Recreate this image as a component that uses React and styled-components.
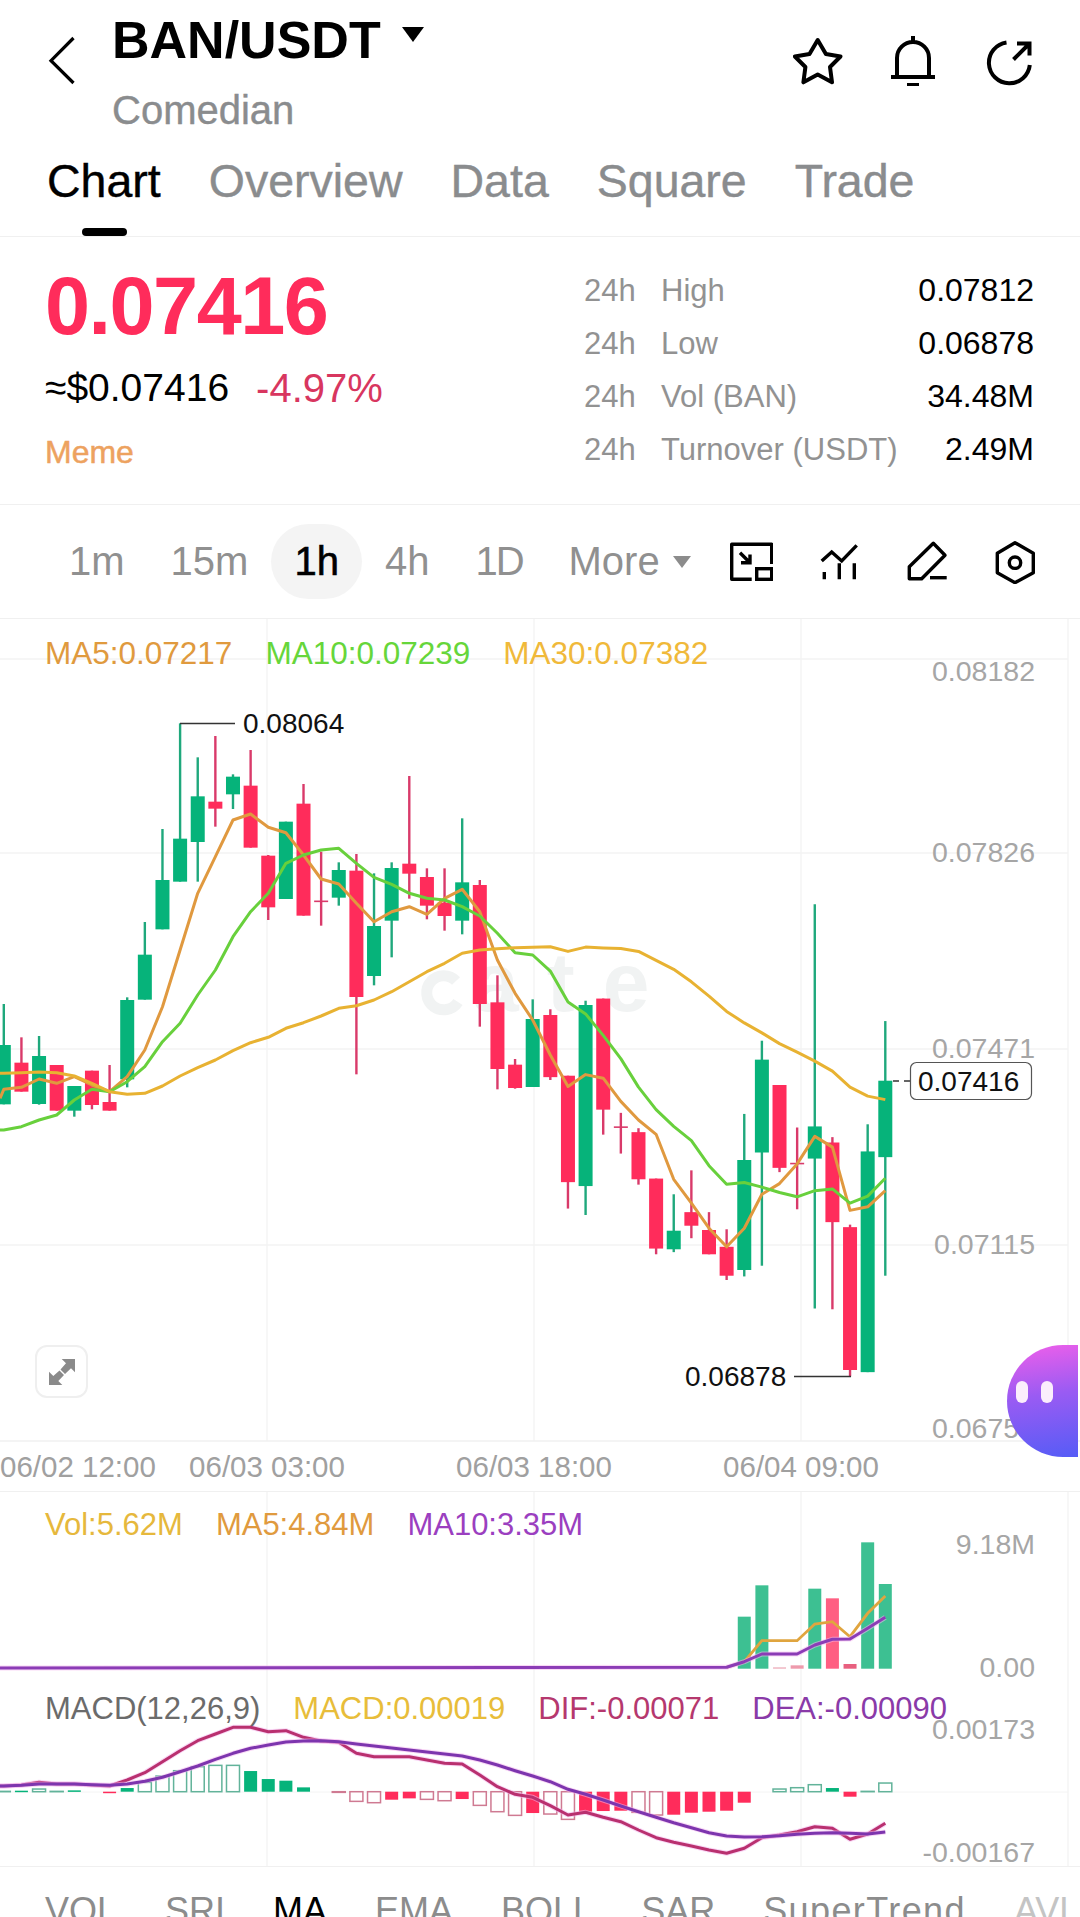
import styled, { createGlobalStyle } from "styled-components";

const GREEN = "#06b37a";
const RED = "#ff2c5b";
const SANS = '"Liberation Sans", Arial, sans-serif';

/* ---------- chart data, sampled off the screenshot ---------- */
const barX = (i) => 3.8 + i * 17.63;
const upperY = (z) => 680 + z / 3;
const lowerY = (z) => 880 + z / 2.8;
const macdY = (z) => 1660 + z / 3;
const volY = (z) => 1480 + z / 3;

// [up, high, bodyTop, bodyBottom, low]
const candlesA = [
  [1, 972, 1095, 1273, 1273], [0, 1072, 1148, 1235, 1235], [1, 1068, 1128, 1272, 1274],
  [0, 1155, 1155, 1292, 1292], [1, 1218, 1218, 1292, 1310], [0, 1172, 1172, 1275, 1288],
  [0, 1155, 1266, 1292, 1292], [1, 952, 960, 1198, 1222], [1, 726, 824, 959, 959],
  [1, 447, 600, 748, 748], [1, 130, 476, 605, 605], [1, 232, 349, 486, 605],
  [0, 168, 365, 386, 440], [1, 283, 290, 343, 387], [0, 210, 317, 503, 503],
  [0, 525, 527, 682, 720], [1, 425, 425, 657, 657], [0, 312, 371, 707, 707],
  [0, 515, 664, 667, 737], [1, 547, 570, 653, 677], [0, 522, 572, 951, 1183],
  [1, 580, 738, 888, 916], [1, 547, 564, 722, 832], [0, 288, 551, 581, 656],
  [0, 565, 591, 677, 718], [0, 565, 668, 708, 752], [1, 415, 607, 722, 763],
  [0, 600, 615, 972, 1040], [0, 886, 967, 1167, 1228], [0, 1137, 1154, 1224, 1226],
  [1, 958, 1017, 1221, 1221],
];
const candlesB = [
  [0, 362, 378, 552, 560], [0, 548, 548, 846, 920], [1, 338, 350, 857, 938],
  [0, 332, 332, 643, 713], [0, 652, 692, 695, 766], [0, 695, 706, 838, 853],
  [0, 836, 836, 1032, 1048], [1, 880, 982, 1034, 1042], [0, 813, 930, 968, 1003],
  [0, 930, 980, 1048, 1048], [0, 978, 1027, 1108, 1120], [1, 655, 784, 1092, 1110],
  [1, 450, 503, 763, 1080], [0, 574, 574, 806, 818], [0, 693, 794, 797, 922],
  [1, 68, 690, 780, 1200], [0, 720, 735, 958, 1202], [0, 965, 972, 1372, 1390],
  [1, 684, 760, 1378, 1378], [1, 395, 562, 776, 1108],
];
const candles = [
  ...candlesA.map(([up, ...rest]) => [up, ...rest.map(upperY)]),
  ...candlesB.map(([up, ...rest]) => [up, ...rest.map(lowerY)]),
];

const mainLine = (a, b) => [...a.map(upperY), ...b.map(lowerY)];
const ma5 = mainLine(
  [1228, 1222, 1197, 1210, 1190, 1215, 1235, 1190, 1110, 980, 810, 640, 530, 420, 402, 442, 458, 525, 597, 612, 670, 725, 695, 680, 703, 655, 628, 695, 840, 940, 1020],
  [490, 578, 545, 555, 620, 672, 712, 838, 905, 975, 1027, 975, 880, 850, 795, 718, 748, 925, 915, 870]
);
const ma10 = mainLine(
  [1350, 1340, 1320, 1305, 1260, 1228, 1235, 1205, 1160, 1085, 1030, 945, 870, 770, 695, 640, 550, 525, 510, 505, 550, 592, 613, 640, 655, 660, 680, 708, 760, 818, 825],
  [255, 342, 375, 435, 500, 580, 643, 690, 730, 800, 852, 847, 860, 875, 887, 870, 865, 905, 885, 835]
);
const ma30 = mainLine(
  [1180, 1178, 1176, 1178, 1188, 1210, 1235, 1243, 1240, 1218, 1188, 1163, 1140, 1112, 1088, 1072, 1045, 1028, 1008, 985, 977, 960, 935, 905, 875, 850, 820, 810, 806, 803, 802],
  [187, 200, 188, 190, 192, 200, 225, 250, 285, 325, 368, 400, 428, 458, 482, 507, 535, 580, 605, 615]
);

const dif = [378, 375, 367, 372, 372, 375, 378, 360, 338, 305, 272, 242, 222, 202, 202, 215, 212, 232, 243, 247, 280, 290, 290, 290, 300, 310, 312, 345, 380, 403, 412, 437, 465, 457, 472, 485, 510, 533, 547, 558, 570, 580, 565, 533, 525, 515, 500, 505, 538, 522, 490].map(macdY);
const dea = [378, 376, 372, 372, 372, 374, 376, 372, 364, 352, 335, 318, 298, 280, 265, 255, 246, 243, 242, 245, 252, 258, 264, 270, 276, 282, 288, 300, 315, 332, 348, 365, 388, 403, 420, 438, 455, 472, 488, 503, 518, 528, 531, 530, 527, 523, 520, 518, 520, 522, 516].map(macdY);

// [height, solid]; positive is green
const histogram = [
  [1, 0], [3, 1], [8, 0], [1, 0], [4, 1], [0, 0], [-4, 1], [11, 1], [28, 0], [47, 0], [63, 0], [75, 0], [79, 0], [79, 0],
  [62, 1], [38, 1], [33, 1], [13, 1], [0, 0], [-2, 0], [-29, 0], [-33, 0], [-24, 1], [-20, 1], [-23, 0], [-27, 0], [-22, 1],
  [-41, 0], [-60, 0], [-71, 0], [-64, 1], [-67, 0], [-83, 0], [-60, 1], [-58, 1], [-57, 1], [-62, 0], [-70, 0], [-69, 1],
  [-63, 1], [-60, 1], [-57, 1], [-33, 1], [0, 0], [8, 0], [12, 0], [21, 0], [11, 1], [-15, 1], [1, 0], [26, 0],
];

// [candle index, top, colour]
const volumes = [
  [42, 410, "#3dc092"], [43, 316, "#3dc092"], [44, 562, "#eeb0bd"], [45, 556, "#ee9aac"], [46, 326, "#3dc092"],
  [47, 355, "#ff5f82"], [48, 552, "#e8607f"], [49, 187, "#3dc092"], [50, 312, "#3dc092"],
];
const volMa5 = [562, 545, 482, 482, 482, 432, 425, 470, 400, 348].map(volY);
const volMa10 = [562, 545, 522, 522, 522, 495, 478, 477, 445, 412].map(volY);

const toPoints = (ys, start = 0) => ys.map((y, i) => `${barX(start + i).toFixed(1)},${y.toFixed(1)}`).join(" ");

/* ---------- page ---------- */
const GlobalStyle = createGlobalStyle`
  html, body {
    margin: 0;
    padding: 0;
    background: #fff;
  }
`;

const Page = styled.div`
  width: 1080px;
  height: 1917px;
  overflow: hidden;
  background: #fff;
  font-family: ${SANS};
  color: #000;
`;

const TopBar = styled.header`
  height: 130px;
  display: flex;
  align-items: flex-start;
`;

const BackIcon = styled.svg`
  width: 28px;
  height: 50px;
  margin: 36px 0 0 48px;
`;

const TitleBlock = styled.div`
  margin-left: 36px;
  padding-top: 10px;
`;

const TitleRow = styled.div`
  display: flex;
  align-items: center;
  height: 60px;
`;

const Title = styled.h1`
  margin: 0;
  font-size: 52px;
  font-weight: 700;
  line-height: 60px;
`;

const Caret = styled.span`
  width: 0;
  height: 0;
  margin: -12px 0 0 21px;
  border-left: 11.5px solid transparent;
  border-right: 11.5px solid transparent;
  border-top: 15px solid #000;
`;

const SubTitle = styled.div`
  margin-top: 18px;
  font-size: 40px;
  line-height: 44px;
  color: #8a8c8e;
  -webkit-text-stroke: 0.4px #8a8c8e;
`;

const TopIcons = styled.div`
  margin-left: auto;
  margin-right: 45px;
  padding-top: 36px;
  display: flex;
  align-items: flex-start;
  gap: 46px;
`;

const TabBar = styled.nav`
  height: 107px;
  box-sizing: border-box;
  border-bottom: 1px solid #f0f0f0;
  padding-left: 47px;
  display: flex;
  gap: 48px;
`;

const Tab = styled.div`
  position: relative;
  height: 106px;
  font-size: 46.5px;
  line-height: 104px;
  margin-top: -1px;
  color: ${(p) => (p.$active ? "#000" : "#8a8c8e")};
  -webkit-text-stroke: 0.4px ${(p) => (p.$active ? "#000" : "#8a8c8e")};

  ${(p) =>
    p.$active &&
    `&::after {
      content: "";
      position: absolute;
      left: 35px;
      bottom: -1px;
      width: 45px;
      height: 8px;
      border-radius: 4px;
      background: #000;
    }`}
`;

const PriceSection = styled.section`
  height: 268px;
  box-sizing: border-box;
  border-bottom: 1px solid #f0f0f0;
  padding: 0 46px 0 45px;
  display: flex;
  justify-content: space-between;
`;

const PriceLeft = styled.div`
  padding-top: 29px;
`;

const BigPrice = styled.div`
  font-size: 81px;
  font-weight: 700;
  line-height: 80px;
  letter-spacing: -1.5px;
  color: ${RED};
`;

const PriceSub = styled.div`
  margin-top: 20px;
  display: flex;
  gap: 27px;
  font-size: 39px;
  line-height: 44px;
`;

const Change = styled.span`
  color: #d8365f;
  font-size: 40px;
`;

const Tag = styled.div`
  margin-top: 22px;
  font-size: 32px;
  line-height: 40px;
  color: #eda25f;
  -webkit-text-stroke: 0.5px #eda25f;
`;

const Stats = styled.div`
  width: 450px;
  padding-top: 27px;
`;

const StatRow = styled.div`
  height: 53px;
  display: flex;
  align-items: center;
  font-size: 31px;
  color: #929292;
`;

const StatPeriod = styled.span`
  width: 77px;
`;

const StatValue = styled.span`
  margin-left: auto;
  font-size: 32px;
  color: #000;
`;

const TimeBar = styled.div`
  height: 114px;
  box-sizing: border-box;
  border-bottom: 1px solid #f0f0f0;
  padding: 0 43px 0 46px;
  display: flex;
  align-items: center;
`;

const TimeItem = styled.div`
  height: 75px;
  padding: 0 23px;
  border-radius: 38px;
  display: flex;
  align-items: center;
  font-size: 40px;
  letter-spacing: ${(p) => (p.$tight ? "-2px" : "0")};
  color: ${(p) => (p.$active ? "#000" : "#909090")};
  background: ${(p) => (p.$active ? "#f4f4f4" : "transparent")};
  -webkit-text-stroke: ${(p) => (p.$active ? "0.6px #000" : "0")};
`;

const MoreCaret = styled.span`
  width: 0;
  height: 0;
  margin-left: 13px;
  border-left: 9px solid transparent;
  border-right: 9px solid transparent;
  border-top: 12px solid #8c8c8c;
`;

const ToolIcons = styled.div`
  margin-left: auto;
  display: flex;
  gap: 44px;
`;

const Pane = styled.section`
  position: relative;
  height: ${(p) => p.$height}px;
`;

const MainPane = styled(Pane)`
  box-sizing: border-box;
  border-bottom: 1px solid #f0f0f0;
`;

const Drawing = styled.svg`
  display: block;
  width: 1080px;
  height: 100%;
`;

const Legend = styled.div`
  position: absolute;
  top: ${(p) => p.$top}px;
  left: 45px;
  display: flex;
  gap: 33px;
  font-size: ${(p) => p.$size || 31}px;
  line-height: 36px;
  white-space: nowrap;
`;

const LegendItem = styled.span`
  color: ${(p) => p.$color};
`;

const AxisLabel = styled.text`
  font-family: ${SANS};
  font-size: 28.5px;
  fill: #a6a6a6;
  text-anchor: end;
`;

const TimeLabel = styled.text`
  font-family: ${SANS};
  font-size: 29.5px;
  fill: #a0a0a0;
  text-anchor: ${(p) => p.$anchor || "middle"};
`;

const MarkLabel = styled.text`
  font-family: ${SANS};
  font-size: 28px;
  fill: #111;
`;

const Watermark = styled.text`
  font-family: ${SANS};
  font-size: 84px;
  font-weight: 700;
  letter-spacing: 28px;
  fill: #f1f3f3;
`;

const ExpandButton = styled.div`
  position: absolute;
  left: 35px;
  top: 726px;
  width: 53px;
  height: 53px;
  box-sizing: border-box;
  border: 2px solid #efefef;
  border-radius: 12px;
  background: #fff;
`;

const Bot = styled.div`
  position: absolute;
  right: 2px;
  top: 726px;
  width: 71px;
  height: 112px;
  border-radius: 56px 0 0 56px;
  background: linear-gradient(172deg, #f05fea 0%, #9a5bf3 45%, #565cf6 100%);
  box-sizing: border-box;
  padding: 36px 0 0 9px;
  display: flex;
  gap: 13px;
`;

const BotEye = styled.span`
  width: 12px;
  height: 22px;
  border-radius: 6px;
  background: #fbeefc;
`;

const IndicatorBar = styled.nav`
  height: 51px;
  box-sizing: border-box;
  border-top: 1px solid #f0f0f0;
  padding: 23px 0 0 45px;
  display: flex;
  gap: 48px;
  overflow: hidden;
  white-space: nowrap;
  font-size: 36px;
  line-height: 42px;
`;

const Indicator = styled.span`
  color: ${(p) => (p.$active ? "#000" : p.$faded ? "#c4c4c4" : "#8c8c8c")};
  letter-spacing: ${(p) => (p.$wide ? "1.4px" : "0")};
`;

/* ---------- icons ---------- */
const Outline = ({ size = 44, width = 3.4, children, ...rest }) => (
  <svg
    width={size}
    height={size}
    viewBox={`0 0 ${size} ${size}`}
    fill="none"
    stroke="#000"
    strokeWidth={width}
    {...rest}
  >
    {children}
  </svg>
);

const TopIcon = styled(Outline)`
  margin-top: ${(p) => p.$top || 0}px;
`;

const StarIcon = () => (
  <TopIcon size={50} width={4} strokeLinejoin="round" $top={1}>
    <path d="M24.7 3 L32.9 17 L47.5 19.5 L37 30 L39 45.3 L24.7 37.5 L10.4 45.3 L12.4 30 L1.9 19.5 L16.5 17 Z" />
  </TopIcon>
);

const BellIcon = () => (
  <TopIcon size={50} width={4}>
    <path d="M24 0 V5 M2 41 H46 M8 41 V22 A16 16 0 0 1 40 22 V41 M18 49 H30" />
  </TopIcon>
);

const ShareIcon = () => (
  <TopIcon size={50} width={4} $top={2}>
    <path d="M21.5 4.5 A20.5 20.5 0 1 0 44.8 27" />
    <path d="M28.5 21.5 L43.5 6.5 M32 5.5 H44.5 V17.5" />
  </TopIcon>
);

const ExpandToolIcon = () => (
  <Outline>
    <path d="M42.7 24 V4.3 H2.7 V39.3 H22.7" strokeLinejoin="round" />
    <rect x="27.7" y="28.7" width="15" height="10.6" />
    <path d="M11 12.7 L21 22.7 M21 14.5 V22.7 H12" />
  </Outline>
);

const IndicatorIcon = () => (
  <Outline>
    <path d="M4.7 21 L14.7 12 L24.7 21 L39.7 5.3" />
    <path d="M7.3 32 V39.3 M22.3 23.3 V39.3 M37.3 23.3 V39.3" />
  </Outline>
);

const PenIcon = () => (
  <Outline strokeLinejoin="round">
    <path d="M28.3 3.3 L40 15.3 L16.7 38.7 H4.3 V26.7 Z" />
    <path d="M25 37.7 H41.7" />
  </Outline>
);

const HexIcon = () => (
  <Outline>
    <path d="M22 2.7 L40.3 13.3 V32.7 L22 42.7 L4.3 32.7 V13.3 Z" strokeLinejoin="round" />
    <circle cx="22" cy="22.7" r="5.7" />
  </Outline>
);

/* ---------- chart parts ---------- */
const VerticalGrid = ({ from, to }) =>
  [267, 534, 801, 1068].map((x) => <line key={x} x1={x} x2={x} y1={from} y2={to} stroke="#f4f4f4" strokeWidth="1.5" />);

const Candle = ({ data, index }) => {
  const [up, high, top, bottom, low] = data;
  const x = barX(index);
  const doji = bottom - top < 3;
  const body = up ? GREEN : RED;
  const wick = up ? "#1fa87c" : "#d93a6a";
  return (
    <g>
      <line x1={x} x2={x} y1={high} y2={low} stroke={wick} strokeWidth="2.4" />
      {doji ? (
        <line x1={x - 7} x2={x + 7} y1={top} y2={top} stroke={wick} strokeWidth="1.6" />
      ) : (
        <rect x={x - 7} y={top} width="14" height={bottom - top} fill={body} />
      )}
    </g>
  );
};

const HistogramBar = ({ value, solid, index }) => {
  if (!value) return null;
  const zero = 1791.7;
  const h = Math.abs(value) / 3;
  const y = value > 0 ? zero - h : zero;
  const x = barX(index) - 6.5;
  if (solid) return <rect x={x} y={y} width="13" height={Math.max(h, 1.5)} fill={value > 0 ? GREEN : RED} />;
  return (
    <rect
      x={x}
      y={y}
      width="13"
      height={h}
      fill="#fff"
      fillOpacity="0.5"
      stroke={value > 0 ? "#62b39a" : "#cf7a92"}
      strokeWidth="1.5"
    />
  );
};

// the purple and magenta lines carry a pale halo in the screenshot
const HaloLine = ({ points, color }) => (
  <>
    <polyline points={points} fill="none" stroke="#f4b6ee" strokeWidth="5" strokeLinejoin="round" opacity="0.55" />
    <polyline points={points} fill="none" stroke={color} strokeWidth="3" strokeLinejoin="round" />
  </>
);

const MainChart = () => (
  <Drawing viewBox="0 619 1080 872">
    <VerticalGrid from={619} to={1441} />
    {[659, 853, 1049, 1245].map((y) => (
      <line key={y} x1="0" x2="1068" y1={y} y2={y} stroke="#f3f3f3" strokeWidth="1.5" />
    ))}
    <line x1="0" x2="1080" y1="1441" y2="1441" stroke="#f0f0f0" strokeWidth="1.5" />
    <path d="M456 981 A17 17 0 1 0 458 1002" fill="none" stroke="#f1f3f3" strokeWidth="11" />
    <Watermark x="472" y="1011">
      ate
    </Watermark>

    {candles.map((c, i) => (
      <Candle key={i} data={c} index={i} />
    ))}

    <polyline points={`0,${ma5[0] + 9} ${toPoints(ma5)}`} fill="none" stroke="#e0993f" strokeWidth="3" strokeLinejoin="round" />
    <polyline points={`0,${ma10[0]} ${toPoints(ma10)}`} fill="none" stroke="#68d03c" strokeWidth="3" strokeLinejoin="round" />
    <polyline points={`0,${ma30[0]} ${toPoints(ma30)}`} fill="none" stroke="#e8b232" strokeWidth="3" strokeLinejoin="round" />

    <AxisLabel x="1035" y="681">0.08182</AxisLabel>
    <AxisLabel x="1035" y="862">0.07826</AxisLabel>
    <AxisLabel x="1035" y="1058">0.07471</AxisLabel>
    <AxisLabel x="1035" y="1254">0.07115</AxisLabel>
    <AxisLabel x="1035" y="1438">0.06759</AxisLabel>

    <TimeLabel x="0" y="1477" $anchor="start">06/02 12:00</TimeLabel>
    <TimeLabel x="267" y="1477">06/03 03:00</TimeLabel>
    <TimeLabel x="534" y="1477">06/03 18:00</TimeLabel>
    <TimeLabel x="801" y="1477">06/04 09:00</TimeLabel>

    <line x1="180" x2="235" y1="723.5" y2="723.5" stroke="#333" strokeWidth="1.5" />
    <MarkLabel x="243" y="733">0.08064</MarkLabel>
    <line x1="794" x2="851" y1="1376.5" y2="1376.5" stroke="#333" strokeWidth="1.5" />
    <MarkLabel x="685" y="1386">0.06878</MarkLabel>

    <line x1="893" x2="910" y1="1081" y2="1081" stroke="#333" strokeWidth="1.5" strokeDasharray="6 5" />
    <rect x="910.5" y="1062.5" width="121" height="37" rx="6" fill="#fff" stroke="#555" strokeWidth="1.2" />
    <MarkLabel x="918" y="1091">0.07416</MarkLabel>
  </Drawing>
);

const VolumeChart = () => (
  <Drawing viewBox="0 1492 1080 193">
    <VerticalGrid from={1492} to={1685} />
    {volumes.map(([i, top, color]) => (
      <rect key={i} x={barX(i) - 6.5} y={volY(top)} width="13" height={1668.7 - volY(top)} fill={color} />
    ))}
    <polyline points={toPoints(volMa5, 41)} fill="none" stroke="#e0a53f" strokeWidth="2.8" />
    <HaloLine points={`0,1668 ${toPoints(volMa10, 41)}`} color="#8b3cb6" />
    <AxisLabel x="1035" y="1554">9.18M</AxisLabel>
    <AxisLabel x="1035" y="1677">0.00</AxisLabel>
  </Drawing>
);

const MacdChart = () => (
  <Drawing viewBox="0 1685 1080 181">
    <VerticalGrid from={1685} to={1866} />
    <line x1="0" x2="1068" y1="1792" y2="1792" stroke="#f4f4f4" strokeWidth="1" />
    {histogram.map(([value, solid], i) => (
      <HistogramBar key={i} value={value} solid={solid} index={i} />
    ))}
    <HaloLine points={`0,${dif[0]} ${toPoints(dif)}`} color="#b9306f" />
    <HaloLine points={`0,${dea[0]} ${toPoints(dea)}`} color="#7d35ae" />
    <AxisLabel x="1035" y="1739">0.00173</AxisLabel>
    <AxisLabel x="1035" y="1862">-0.00167</AxisLabel>
  </Drawing>
);

const stats = [
  ["High", "0.07812"],
  ["Low", "0.06878"],
  ["Vol (BAN)", "34.48M"],
  ["Turnover (USDT)", "2.49M"],
];

const App = () => (
  <Page>
    <GlobalStyle />
    <TopBar>
      <BackIcon viewBox="0 0 28 50" fill="none" stroke="#000" strokeWidth="3.2">
        <path d="M25.5 2 L3 24.7 L25.5 47" />
      </BackIcon>
      <TitleBlock>
        <TitleRow>
          <Title>BAN/USDT</Title>
          <Caret />
        </TitleRow>
        <SubTitle>Comedian</SubTitle>
      </TitleBlock>
      <TopIcons>
        <StarIcon />
        <BellIcon />
        <ShareIcon />
      </TopIcons>
    </TopBar>

    <TabBar>
      <Tab $active>Chart</Tab>
      <Tab>Overview</Tab>
      <Tab>Data</Tab>
      <Tab>Square</Tab>
      <Tab>Trade</Tab>
    </TabBar>

    <PriceSection>
      <PriceLeft>
        <BigPrice>0.07416</BigPrice>
        <PriceSub>
          <span>≈$0.07416</span>
          <Change>-4.97%</Change>
        </PriceSub>
        <Tag>Meme</Tag>
      </PriceLeft>
      <Stats>
        {stats.map(([label, value]) => (
          <StatRow key={label}>
            <StatPeriod>24h</StatPeriod>
            <span>{label}</span>
            <StatValue>{value}</StatValue>
          </StatRow>
        ))}
      </Stats>
    </PriceSection>

    <TimeBar>
      <TimeItem>1m</TimeItem>
      <TimeItem>15m</TimeItem>
      <TimeItem $active>1h</TimeItem>
      <TimeItem>4h</TimeItem>
      <TimeItem $tight>1D</TimeItem>
      <TimeItem>
        More
        <MoreCaret />
      </TimeItem>
      <ToolIcons>
        <ExpandToolIcon />
        <IndicatorIcon />
        <PenIcon />
        <HexIcon />
      </ToolIcons>
    </TimeBar>

    <MainPane $height={873}>
      <MainChart />
      <Legend $top={16} $size={31.5}>
        <LegendItem $color="#e09a3e">MA5:0.07217</LegendItem>
        <LegendItem $color="#66d63a">MA10:0.07239</LegendItem>
        <LegendItem $color="#f0b93a">MA30:0.07382</LegendItem>
      </Legend>
      <ExpandButton>
        <svg width="49" height="49" viewBox="2 2 49 49" fill="#8a8a8a" stroke="none">
          <path d="M26.7 14 H40 V27.3 L36 23.3 L30 29 L25.5 24.5 L31 18.3 Z" />
          <path d="M14 26.7 V40 H27.3 L23.3 36 L29 30 L24.5 25.5 L18.3 31 Z" />
        </svg>
      </ExpandButton>
      <Bot>
        <BotEye />
        <BotEye />
      </Bot>
    </MainPane>

    <Pane $height={193}>
      <VolumeChart />
      <Legend $top={15}>
        <LegendItem $color="#e6b83c">Vol:5.62M</LegendItem>
        <LegendItem $color="#e09a3e">MA5:4.84M</LegendItem>
        <LegendItem $color="#9b3fc0">MA10:3.35M</LegendItem>
      </Legend>
    </Pane>

    <Pane $height={181}>
      <MacdChart />
      <Legend $top={6}>
        <LegendItem $color="#6b6b6b">MACD(12,26,9)</LegendItem>
        <LegendItem $color="#e8bd3a">MACD:0.00019</LegendItem>
        <LegendItem $color="#b5386e">DIF:-0.00071</LegendItem>
        <LegendItem $color="#8a3aa8">DEA:-0.00090</LegendItem>
      </Legend>
    </Pane>

    <IndicatorBar>
      <Indicator>VOL</Indicator>
      <Indicator>SRI</Indicator>
      <Indicator $active>MA</Indicator>
      <Indicator>EMA</Indicator>
      <Indicator>BOLL</Indicator>
      <Indicator>SAR</Indicator>
      <Indicator $wide>SuperTrend</Indicator>
      <Indicator $faded>AVL</Indicator>
    </IndicatorBar>
  </Page>
);

export default App;
